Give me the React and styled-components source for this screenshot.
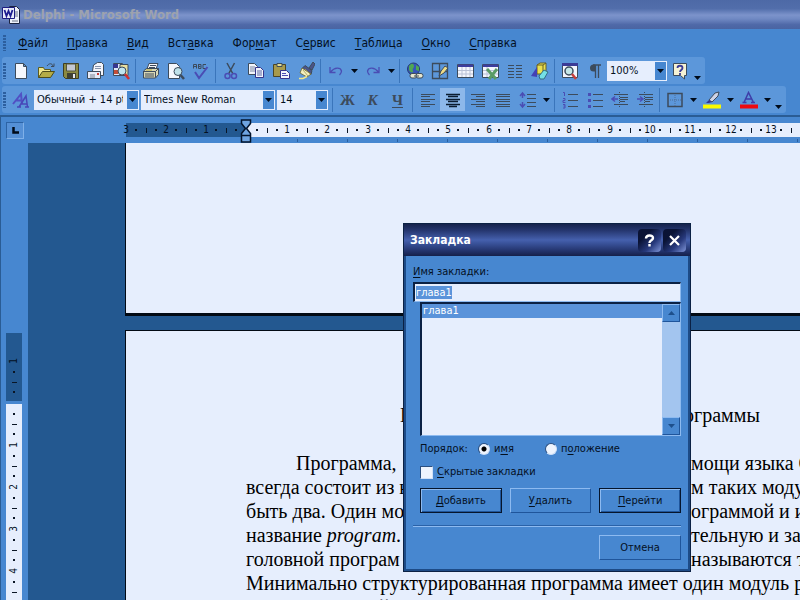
import React, { useEffect, useRef, useState } from 'react'
import styled, { createGlobalStyle, css } from 'styled-components';

const MENU = [
    ['', 'Ф', 'айл'],
    ['', 'П', 'равка'],
    ['', 'В', 'ид'],
    ['Вст', 'а', 'вка'],
    ['Фор', 'м', 'ат'],
    ['С', 'е', 'рвис'],
    ['', 'Т', 'аблица'],
    ['', 'О', 'кно'],
    ['', 'С', 'правка'],
];

const RULER = ['3', '2', '1', '', '1', '2', '3', '4', '5', '6', '7', '8', '9', '10', '11', '12', '13'];
const SIDE_RULER_TOP = ['1'];
const SIDE_RULER = ['', '1', '2', '3', '4'];

const LINES = [
    { indent: true, left: 'Программа,', right: 'мощи языка Object' },
    { left: 'всегда состоит из н', right: 'м таких модулей' },
    { left: 'быть два. Один мод', right: 'ограммой и имеет' },
    { left: <>название <i>program</i>.</>, right: 'тельную и заверша' },
    { left: 'головной програм', right: 'называются так' },
];

/* ---------- icons ---------- */

const ink = '#3c4b5c';
const violet = '#4a4db4';

const ICONS = {
    fresh: <path d="M3.5 1.5h8l3 3v12h-11zM11.5 1.5v3h3" fill="#f4f7fd" stroke={ink} />,
    open: <>
        <path d="M1.5 15.5v-10h5l1 2h6v3" fill="#f0e68a" stroke="#5d5c20" />
        <path d="M1.5 15.5l4-6h12l-4 6z" fill="#b5ac46" stroke="#4d4c1a" />
        <path d="M10 4c2-3 5-3 6 0M14 4.500h3v-3" fill="none" stroke={ink} />
    </>,
    save: <>
        <path d="M1.500 1.500h15v15h-13l-2-2z" fill="#8b8a42" stroke="#3d3d22" />
        <path d="M4.500 2h9v7h-9z" fill="#c3c8d2" stroke="#55553a" />
        <path d="M5 11h9v5h-9z" fill="#3f4033" />
        <path d="M11 12h2v4h-2z" fill="#e8ebf2" />
    </>,
    mail: <>
        <path d="M5.500 9l1-6 4-2.500h4l2 2v11h-3" fill="#f3f5fb" stroke={ink} />
        <path d="M8 4.500h6M8 6.500h6" stroke="#8794ad" />
        <path d="M.500 9.500h13v7h-13z" fill="#e6ebf7" stroke={ink} />
        <path d="M3 13h5M3 15h5" stroke="#7b8493" />
        <path d="M10 11h2v2h-2z" fill="#c83a34" />
    </>,
    search: <>
        <path d="M1.500 1.500h9v12h-9z" fill="#dce4f6" stroke={ink} />
        <path d="M1 2h5v4H1z" fill="#37368f" />
        <path d="M2 8h4v4H2z" fill="#c34d38" />
        <path d="M8 2.500h8v11H8z" fill="#e8dfa0" stroke={ink} />
        <circle cx="10" cy="9" r="4" fill="#bfe4ee" stroke={ink} />
        <path d="M13 12l4 5" stroke="#cf2f2f" strokeWidth="2.500" />
    </>,
    print: <>
        <path d="M5 7l2-5.500h9L14 7z" fill="#f4f6fb" stroke={ink} />
        <path d="M1.500 9l3-2.500h12v6l-3 3.500h-12z" fill="#d9d8b4" stroke={ink} />
        <path d="M1.500 9.500h12l3-3M13.500 9.500v6M3 12h9M3 14h9M8 3.500h6M7 5.500h6" fill="none" stroke={ink} />
        <path d="M4 8h6" stroke="#b8ac3c" />
    </>,
    preview: <>
        <path d="M1.500 1.500h8l3 3v12h-11z" fill="#f4f7fd" stroke={ink} />
        <circle cx="11" cy="9.500" r="4" fill="#bfe2ea" stroke={ink} />
        <path d="M13.500 13l3.500 4" stroke={ink} strokeWidth="2.500" />
    </>,
    spell: <>
        <path d="M1.500 6.500v-4h3v4M1.500 4.500h3M6.500 2v4.500h2.500v-4H6.500M6.500 4.500h2M14 2.500h-3v4h3" fill="none" stroke={ink} />
        <path d="M3 10l4 6L15.500 5" fill="none" stroke={violet} strokeWidth="2" />
    </>,
    cut: <>
        <path d="M5 1l6 11M12.500 1l-6 11" stroke={ink} strokeWidth="1.500" />
        <circle cx="5.500" cy="14" r="2.500" fill="none" stroke={violet} strokeWidth="1.500" />
        <circle cx="12" cy="14" r="2.500" fill="none" stroke={violet} strokeWidth="1.500" />
    </>,
    copy: <>
        <path d="M1.500 1.500h6l3 3v8h-9z" fill="#f2f5fc" stroke={ink} />
        <path d="M3 5h5M3 7h5M3 9h5" stroke="#7a86a3" />
        <path d="M8.500 5.500h5l3 3v7h-8z" fill="#f2f5fc" stroke="#35358c" />
        <path d="M10 9h5M10 11h5M10 13h5" stroke="#5b66a5" />
    </>,
    paste: <>
        <path d="M1.500 2.500h12v12h-12z" fill="#a79a4c" stroke="#4a4526" />
        <path d="M5 1.500h5v3H5z" fill="#e4dc90" stroke={ink} />
        <path d="M8.500 8.500h6l3 3v5h-9z" fill="#f2f5fc" stroke="#35358c" />
        <path d="M10 11.500h4M10 13.500h6" stroke={violet} />
    </>,
    brush: <>
        <path d="M12 6l4-6 2 2-3 6z" fill="#4b5488" stroke={ink} />
        <path d="M8 3.500l7 5-1 4-9-6z" fill="#4b5488" stroke={ink} />
        <path d="M5 6l9 6-4 3-7-4z" fill="#f3efc0" stroke="#67622c" strokeWidth=".8" />
        <path d="M2 16.500h4l4-2" fill="none" stroke="#efe68b" strokeWidth="1.500" />
        <path d="M6 8l5 6M8 7l5 5" stroke="#a39c4c" strokeWidth=".8" />
    </>,
    undo: <path d="M3 5v5.500h5.500M3.500 10c4-5 10-5 11-1 0 2-1 3-2 4" fill="none" stroke={violet} strokeWidth="1.300" />,
    redo: <path d="M15 5v5.500H9.500M14.500 10c-4-5-10-5-11-1 0 2 1 3 2 4" fill="none" stroke={violet} strokeWidth="1.300" />,
    link: <>
        <circle cx="7.500" cy="7" r="6" fill="#3554b8" stroke="#263b6f" />
        <path d="M3 4c3-4 5-2 5 0s-2 3-1 5-3 2-4-1zM10 3l3 2v4l-3-1z" fill="#4fa653" />
        <rect x="4" y="11.500" width="7" height="4.500" rx="2" fill="#e8e7cf" stroke={ink} />
        <rect x="10" y="11.500" width="7" height="4.500" rx="2" fill="#e8e7cf" stroke={ink} />
        <path d="M8 14h5" stroke={ink} />
    </>,
    tables: <>
        <path d="M1.500 1.500h15v15h-15zM8.500 1.500v15M1.500 9.500h15" fill="none" stroke={ink} strokeWidth="1.300" />
        <path d="M8 14l2-5 4-5 3 2-4 5z" fill="#f0dd86" stroke={ink} />
    </>,
    table: <>
        <path d="M1.500 2.500h16v13h-16z" fill="#f4f6fd" stroke={ink} />
        <path d="M2 2.500h15v2.500H2z" fill="#3d3d9e" />
        <path d="M2 8.500h15M2 12h15M6 5v10M10 5v10M14 5v10" stroke="#b9c1d6" />
    </>,
    excel: <>
        <path d="M1.500 2.500h16v13h-16z" fill="#f4f6fd" stroke={ink} />
        <path d="M2 2.500h15v2.500H2z" fill="#3d3d9e" />
        <path d="M2 8.500h15M2 12h15M6 5v10" stroke="#b9c1d6" />
        <path d="M6 7l9 10M16 7L8 17" stroke="#5a9c66" strokeWidth="3" />
    </>,
    columns: <path d="M2 3.500h6M2 6.500h6M2 9.500h6M2 12.500h6M2 15.500h6M10 3.500h6M10 6.500h6M10 9.500h6M10 12.500h6M10 15.500h6" stroke={ink} />,
    drawing: <>
        <path d="M6 3l3-2h6v9l-3 2H6z" fill="#ebe04f" stroke="#666127" />
        <path d="M12 3v8M6 3h6l3-2" fill="none" stroke="#666127" />
        <path d="M0 14l6-9v10z" fill="#4441b5" />
        <path d="M8 14l5-6 4 2-4 7-4 0z" fill="#73e0e6" stroke="#326f83" />
    </>,
    map: <>
        <path d="M1.500 1.500h15v14h-15z" fill="#f3f5fc" stroke={ink} />
        <path d="M1 1h16v3H1z" fill="#3b3b96" />
        <circle cx="8" cy="9" r="4" fill="#c6e8e8" stroke={ink} strokeWidth="1.500" />
        <path d="M11 12l4 5" stroke="#c8403c" strokeWidth="2.500" />
    </>,
    pilcrow: <>
        <path d="M9 2.500H7.500a3.500 3.500 0 000 7H9z" fill={ink} />
        <path d="M7 3h8M9.500 3v13M12.500 3v13" fill="none" stroke={ink} strokeWidth="1.300" />
    </>,
    help: <>
        <path d="M2.500 1.500h13v12h-2v3.500l-4-3.500h-7z" fill="#f5f2d4" stroke={ink} />
        <path d="M6.500 6c0-3 5-3 5 0 0 2-2.500 2-2.500 4M9 11v2" fill="none" stroke="#3b3b96" strokeWidth="1.800" />
    </>,
    styles: <>
        <path d="M1 13L9 3l1 10M4 9.500h5" fill="none" stroke="#5150c4" strokeWidth="2" />
        <path d="M7 16l7-11 1.500 11M9 13h6M5 16h4M13 16h4" fill="none" stroke="#4747b8" strokeWidth="1.500" />
    </>,
    left: <path d="M2 3.500h14M2 5.500h9M2 8.500h14M2 10.500h9M2 13.500h14M2 15.500h9" stroke={ink} />,
    center: <path d="M2 3.500h14M4 5.500h10M2 8.500h14M4 10.500h10M2 13.500h14M5 15.500h8" stroke="#0b1c30" strokeWidth="1.300" />,
    right: <path d="M2 3.500h14M7 5.500h9M2 8.500h14M7 10.500h9M2 13.500h14M7 15.500h9" stroke={ink} />,
    justify: <path d="M2 3.500h14M2 5.500h14M2 8.500h14M2 10.500h14M2 13.500h14M2 15.500h14" stroke={ink} />,
    spacing: <>
        <path d="M3.500 3v4M3.500 11v4M1 5l2.500-3L6 5M1 13l2.500 3L6 13" fill="none" stroke={violet} strokeWidth="1.500" />
        <path d="M8 3.500h9M8 7.500h9M8 11.500h9M8 15.500h9" stroke={ink} />
    </>,
    numbers: <>
        <path d="M7 3.500h10M7 9.500h10M7 15.500h10" stroke={ink} />
        <path d="M2 1.500h1.500V5M2 7.500h2v2H2v2h2.500M2 13.500h2v3.500H2M2.500 15h1.500" fill="none" stroke={violet} />
    </>,
    bullets: <>
        <path d="M7 3.500h10M7 9.500h10M7 15.500h10" stroke={ink} />
        <path d="M2 2h3v3H2zM2 8h3v3H2zM2 14h3v3H2z" fill={violet} />
    </>,
    outdent: <>
        <path d="M3 3.500h14M9 6.500h8M9 8.500h8M9 10.500h5M3 13.500h14" stroke={ink} />
        <path d="M8.500 1v16" stroke={ink} strokeDasharray="1 1" />
        <path d="M7 8H1M4 5.500L1 8l3 2.500" fill="none" stroke={violet} strokeWidth="1.500" />
    </>,
    indent: <>
        <path d="M3 3.500h14M9 6.500h8M9 8.500h8M9 10.500h5M3 13.500h14" stroke={ink} />
        <path d="M8.500 1v16" stroke={ink} strokeDasharray="1 1" />
        <path d="M1 8h6M4 5.500L7 8l-3 2.500" fill="none" stroke={violet} strokeWidth="1.500" />
    </>,
    border: <>
        <path d="M2 2.500h14v13H2z" fill="none" stroke={ink} strokeWidth="1.500" />
        <path d="M9 4v11M4 9h11" stroke="#4e6f97" strokeDasharray="1 1" />
    </>,
    marker: <>
        <path d="M6 9l6-7 4-1-1 4-6 6z" fill="#cdd3e6" stroke={ink} />
        <path d="M3 12l3-3 3 2-3 1z" fill="#36368f" />
        <path d="M0 13.500h18v4H0z" fill="#fbfb00" />
    </>,
    color: <>
        <path d="M4 11.500L8.500 1.500l5 10M6 8h6M2.500 11.500h4M11 11.500h4" fill="none" stroke="#3e3da8" strokeWidth="1.500" />
        <path d="M0 13.500h18v4H0z" fill="#ee0a10" />
    </>,
};

const Icon = ({ name }) => (
    <svg width="18" height="18" viewBox="0 0 18 18" aria-hidden="true">{ICONS[name]}</svg>
);

const Arrow = ({ up, fill = '#000b1a' }) => (
    <svg width="7" height="4" viewBox="0 0 7 4" aria-hidden="true">
        <path d={up ? 'M0 4h7L3.500 0z' : 'M0 0h7L3.500 4z'} fill={fill} />
    </svg>
);

const Tool = ({ name, label, ...rest }) => (
    <ToolButton type="button" aria-label={label} {...rest}><Icon name={name} /></ToolButton>
);

const Drop = ({ label, low }) => (
    <DropButton type="button" aria-label={label} $low={low}><Arrow /></DropButton>
);

const Combo = ({ label, value, width }) => (
    <ComboBox $width={width}>
        <select aria-label={label} defaultValue={value}>
            <option>{value}</option>
        </select>
        <span><Arrow /></span>
    </ComboBox>
);

const Hot = ({ parts }) => <span>{parts[0]}<u>{parts[1]}</u>{parts[2]}</span>;

function BookmarkDialog() {
    const inputRef = useRef(null);
    const [order, setOrder] = useState('name');
    const [hidden, setHidden] = useState(false);

    useEffect(() => {
        inputRef.current?.focus();
        inputRef.current?.select();
    }, []);

    return (
        <Dialog role="dialog" aria-labelledby="dialog-title">
            <DialogTitle>
                <h2 id="dialog-title">Закладка</h2>
                <CaptionButton type="button" aria-label="Помощь">
                    <svg width="11" height="13" viewBox="0 0 11 13"><path d="M2 4.500C2 .5 9 .5 9 4c0 2.500-3.500 2-3.500 5M5.500 10v2.500" fill="none" stroke="#fff" strokeWidth="2.400" /></svg>
                </CaptionButton>
                <CaptionButton type="button" aria-label="Закрыть">
                    <svg width="11" height="11" viewBox="0 0 11 11"><path d="M1 1l9 9M10 1l-9 9" stroke="#fff" strokeWidth="2.200" /></svg>
                </CaptionButton>
            </DialogTitle>
            <DialogBody>
                <FieldLabel htmlFor="bookmark"><Hot parts={['', 'И', 'мя закладки:']} /></FieldLabel>
                <NameInput id="bookmark" ref={inputRef} defaultValue="глава1" />
                <Indented>
                    <ListBox>
                        <ul role="listbox" aria-label="Закладки">
                            <li role="option" aria-selected="true">глава1</li>
                        </ul>
                        <ScrollBar>
                            <button type="button" aria-label="Вверх"><Arrow up fill="#1d4f8c" /></button>
                            <button type="button" aria-label="Вниз"><Arrow fill="#1d4f8c" /></button>
                        </ScrollBar>
                    </ListBox>
                    <OrderRow role="radiogroup" aria-label="Порядок">
                        <div>Порядок:</div>
                        <label>
                            <Radio name="order" checked={order === 'name'} onChange={() => setOrder('name')} />
                            <Hot parts={['и', 'м', 'я']} />
                        </label>
                        <label>
                            <Radio name="order" checked={order === 'place'} onChange={() => setOrder('place')} />
                            <Hot parts={['п', 'о', 'ложение']} />
                        </label>
                    </OrderRow>
                    <CheckRow>
                        <Check checked={hidden} onChange={() => setHidden(!hidden)} />
                        <Hot parts={['', 'С', 'крытые закладки']} />
                    </CheckRow>
                    <ButtonRow>
                        <PushButton type="button" $strong><Hot parts={['', 'Д', 'обавить']} /></PushButton>
                        <PushButton type="button"><Hot parts={['', 'У', 'далить']} /></PushButton>
                        <PushButton type="button" $strong><Hot parts={['', 'П', 'ерейти']} /></PushButton>
                    </ButtonRow>
                </Indented>
                <Divider />
                <Footer>
                    <PushButton type="button">Отмена</PushButton>
                </Footer>
            </DialogBody>
        </Dialog>
    )
}

function App() {
  return (
    <AppContainer>
        <GlobalStyle />
        <TitleBar>
            <svg width="18" height="18" viewBox="0 0 18 18" aria-hidden="true">
                <path d="M7.500.500h7l3 3v14h-10z" fill="#eef1fa" stroke="#1b2340" />
                <path d="M13 6h3M13 8h3M13 10h3M10 15h6" stroke="#6b7284" />
                <path d="M.500 1.500h12v11H.500z" fill="#e8ebfa" stroke="#1c1c80" />
                <path d="M2.500 4l2 6 2-5 2 5 2-6" fill="none" stroke="#1c1c90" strokeWidth="1.800" />
            </svg>
            <h1>Delphi - Microsoft Word</h1>
        </TitleBar>
        <MenuBar>
            <Grip />
            {MENU.map((parts) => (
                <MenuItem type="button" key={parts.join('')}><Hot parts={parts} /></MenuItem>
            ))}
        </MenuBar>
        <ToolBar>
            <Grip />
            <Tool name="fresh" label="Создать" />
            <Tool name="open" label="Открыть" />
            <Tool name="save" label="Сохранить" />
            <Tool name="mail" label="Сообщение" />
            <Tool name="search" label="Найти" />
            <Separator />
            <Tool name="print" label="Печать" />
            <Tool name="preview" label="Предварительный просмотр" />
            <Tool name="spell" label="Правописание" />
            <Separator />
            <Tool name="cut" label="Вырезать" />
            <Tool name="copy" label="Копировать" />
            <Tool name="paste" label="Вставить" />
            <Tool name="brush" label="Формат по образцу" />
            <Separator />
            <Tool name="undo" label="Отменить" />
            <Drop label="Список отмены" />
            <Tool name="redo" label="Вернуть" />
            <Drop label="Список возврата" />
            <Separator />
            <Tool name="link" label="Гиперссылка" />
            <Tool name="tables" label="Таблицы и границы" />
            <Tool name="table" label="Добавить таблицу" />
            <Tool name="excel" label="Таблица Excel" />
            <Tool name="columns" label="Колонки" />
            <Tool name="drawing" label="Рисование" />
            <Separator />
            <Tool name="map" label="Схема документа" />
            <Tool name="pilcrow" label="Непечатаемые знаки" />
            <Combo label="Масштаб" value="100%" width={60} />
            <Tool name="help" label="Справка" />
            <Drop label="Параметры панели" low />
        </ToolBar>
        <ToolBar>
            <Grip />
            <Tool name="styles" label="Стили" />
            <ComboGroup>
                <Combo label="Стиль" value="Обычный + 14 pt" width={105} />
                <Combo label="Шрифт" value="Times New Roman" width={134} />
                <Combo label="Размер" value="14" width={51} />
            </ComboGroup>
            <Separator />
            <ToolButton type="button" aria-label="Полужирный"><Glyph>Ж</Glyph></ToolButton>
            <ToolButton type="button" aria-label="Курсив"><Glyph><i>К</i></Glyph></ToolButton>
            <ToolButton type="button" aria-label="Подчеркнутый"><Glyph><u>Ч</u></Glyph></ToolButton>
            <Separator />
            <Tool name="left" label="По левому краю" />
            <Tool name="center" label="По центру" $pressed />
            <Tool name="right" label="По правому краю" />
            <Tool name="justify" label="По ширине" />
            <Tool name="spacing" label="Интервал" />
            <Drop label="Выбор интервала" />
            <Separator />
            <Tool name="numbers" label="Нумерация" />
            <Tool name="bullets" label="Маркеры" />
            <Tool name="outdent" label="Уменьшить отступ" />
            <Tool name="indent" label="Увеличить отступ" />
            <Separator />
            <Tool name="border" label="Границы" />
            <Drop label="Выбор границы" />
            <Tool name="marker" label="Выделение цветом" />
            <Drop label="Выбор выделения" />
            <Tool name="color" label="Цвет шрифта" />
            <Drop label="Выбор цвета" />
            <Drop label="Параметры форматирования" low />
        </ToolBar>
        <RulerBar>
            <TabButton type="button" aria-label="Табуляция">
                <svg width="7" height="7" viewBox="0 0 7 7"><path d="M1.500 0v5.500H7" fill="none" stroke="#000b1a" strokeWidth="2.500" /></svg>
            </TabButton>
            <RulerTrack>
                <Strip>
                    {RULER.map((n, i) => (
                        <RulerCell key={i}><b>{n}</b><i /><s /><i /></RulerCell>
                    ))}
                </Strip>
                <IndentMarker width="12" height="25" viewBox="0 0 12 25" aria-hidden="true">
                    <path d="M1.500 1h9v3.500L6.500 9.500l4 5v8.500h-9v-8.500l4-5-4-5z" fill="#6ea3e0" stroke="#03142c" strokeWidth="1.500" />
                    <path d="M1.500 16.500h9" stroke="#03142c" strokeWidth="1.500" />
                </IndentMarker>
            </RulerTrack>
        </RulerBar>
        <Workspace>
            <SideRuler>
                <SideStrip $dark>
                    {SIDE_RULER_TOP.map((n, i) => (
                        <SideCell key={i}><b>{n}</b><i /><s /><i /></SideCell>
                    ))}
                </SideStrip>
                <SideStrip>
                    {SIDE_RULER.map((n, i) => (
                        <SideCell key={i}><b>{n}</b><i /><s /><i /></SideCell>
                    ))}
                </SideStrip>
            </SideRuler>
            <Canvas>
                <BlankPage />
                <Page>
                    <Heading><span>П</span><span>ограммы</span></Heading>
                    {LINES.map((line, i) => (
                        <TextLine key={i} $indent={line.indent}>
                            <span>{line.left}</span>
                            <span>{line.right}</span>
                        </TextLine>
                    ))}
                    <FullLine>Минимально структурированная программа имеет один модуль program</FullLine>
                    <FullLine>не выполняемый С</FullLine>
                </Page>
            </Canvas>
        </Workspace>
        <BookmarkDialog />
    </AppContainer>
  )
}

export default App;

const GlobalStyle = createGlobalStyle`
    * {
        box-sizing: border-box;
    }

    body {
        margin: 0;
        color: #04101f;
        font: 11px/14px "DejaVu Sans Condensed", "DejaVu Sans", sans-serif;
    }

    button, select, input {
        margin: 0;
        padding: 0;
        border: 0;
        border-radius: 0;
        background: none;
        color: inherit;
        font: inherit;
    }

    svg {
        display: block;
        flex: none;
    }

    u {
        text-underline-offset: 2px;
    }
`;

const AppContainer = styled.div`
    position: relative;
    display: flex;
    flex-direction: column;
    height: 100vh;
    overflow: hidden;
    background: #4787d0;
`;

const TitleBar = styled.header`
    display: flex;
    flex: none;
    align-items: center;
    gap: 3px;
    height: 29px;
    padding-left: 2px;
    background: linear-gradient(#4d69a6, #526eab 30%, #7c93cb 52%, #7089c3 65%, #4f69a8 85%, #4a64a2);

>h1 {
    margin: 0;
    color: #9da2ae;
    font-size: 13px;
    line-height: 18px;
}
`;

const MenuBar = styled.nav`
    display: flex;
    flex: none;
    align-items: center;
    gap: 1px;
    height: 28px;
    padding-left: 3px;
`;

const MenuItem = styled.button`
    padding: 0 9px;
    font-size: 12px;
    line-height: 18px;
`;

const Grip = styled.span`
    flex: none;
    width: 3px;
    height: 16px;
    margin-right: 2px;
    background: repeating-linear-gradient(#2c5f9f 0 2px, transparent 2px 3px);
`;

const ToolBar = styled.div`
    display: flex;
    flex: none;
    align-items: center;
    align-self: flex-start;
    height: 27px;
    margin: 0 0 2px 2px;
    padding: 0 2px 0 1px;
    border-radius: 3px;
    background: #5c97da;
`;

const ToolButton = styled.button`
    display: flex;
    flex: none;
    align-items: center;
    justify-content: center;
    width: 25px;
    height: 23px;

    ${({ $pressed }) => $pressed && css`
        background: #8db8ea;
    `}
`;

const DropButton = styled.button`
    display: flex;
    flex: none;
    align-items: ${({ $low }) => ($low ? 'flex-end' : 'center')};
    justify-content: center;
    width: ${({ $low }) => ($low ? 11 : 12)}px;
    height: 18px;
`;

const Separator = styled.span`
    flex: none;
    width: 1px;
    height: 24px;
    margin: 0 2px;
    background: #3a75bb;
`;

const Glyph = styled.span`
    color: ${ink};
    font: bold 15px/18px "Liberation Serif", serif;
`;

const ComboGroup = styled.div`
    display: flex;
    gap: 2px;
    margin: 0 2px 0 1px;
`;

const ComboBox = styled.div`
    display: flex;
    width: ${({ $width }) => $width}px;
    height: 20px;
    border: 1px solid #e6eefd;
    background: #e6eefd;

>select {
    flex: 1;
    min-width: 0;
    margin-right: 4px;
    padding-left: 2px;
    appearance: none;
    outline: none;
}

>span {
    display: flex;
    align-items: center;
    justify-content: center;
    width: 11px;
    background: #4787d0;
}
`;

const RulerBar = styled.div`
    display: flex;
    flex: none;
    align-items: flex-start;
    height: 28px;
    padding: 5px 0 0 5px;
    border-top: 2px solid #2a5c94;
    border-left: 1px solid #2a5c94;
`;

const TabButton = styled.button`
    display: flex;
    flex: none;
    align-items: center;
    justify-content: center;
    width: 18px;
    height: 17px;
    margin-right: 97px;
    border: 1px solid #7fb0e8;
    border-top-color: #2c63a5;
    border-left-color: #2c63a5;
    background: #5590d6;
`;

const RulerTrack = styled.div`
    position: relative;
    flex: 1;
    min-width: 0;
    height: 21px;
    background: repeating-linear-gradient(90deg, transparent 0 49px, #2a5f9f 49px 50px) 127px 17px / 100% 3px no-repeat;
`;

const Strip = styled.div`
    display: grid;
    grid-template-columns: repeat(6, 40px 40px 41px);
    height: 14px;
    margin-top: 1px;
    overflow: hidden;
    background: linear-gradient(90deg, transparent 0 5px, #235890 5px 125px, #e6eefd 125px);
`;

const cellMarks = css`
>b {
    display: flex;
    justify-content: center;
    font-size: 10px;
    font-weight: 400;
    line-height: 14px;
}

>i, >s {
    background: #0a1626;
}
`;

const RulerCell = styled.div`
    display: grid;
    grid-template-columns: repeat(4, 10px);
    align-items: center;
    justify-items: center;
    ${cellMarks}

>i {
    width: 2px;
    height: 2px;
}

>s {
    width: 1px;
    height: 5px;
}
`;

const IndentMarker = styled.svg`
    position: absolute;
    top: -3px;
    left: 119px;
`;

const Workspace = styled.main`
    display: flex;
    flex: 1;
    min-height: 0;
`;

const SideRuler = styled.div`
    display: flex;
    flex: none;
    flex-direction: column;
    gap: 3px;
    width: 28px;
    padding: 190px 6px 0 5px;
    border-left: 1px solid #2a5c94;
    overflow: hidden;
`;

const SideCell = styled.div`
    display: grid;
    flex: none;
    grid-template-rows: 12px 10px 10px 10px;
    align-items: center;
    justify-items: center;
    ${cellMarks}

>b {
    writing-mode: vertical-rl;
    transform: rotate(180deg);
}

>i {
    width: 2px;
    height: 2px;
}

>s {
    width: 5px;
    height: 1px;
}
`;

const SideStrip = styled.div`
    display: flex;
    flex-direction: column;
    width: 16px;
    background: #e6eefd;

    ${({ $dark }) => $dark ? css`
        padding-top: 22px;
        height: 68px;
        background: #235890;
    ` : css`
        flex: 1;
        min-height: 0;
        overflow: hidden;

        >${SideCell}:first-child {
            grid-template-rows: 5px 10px 10px 10px;
        }
    `}
`;

const Canvas = styled.div`
    display: flex;
    flex: 1;
    flex-direction: column;
    gap: 14px;
    min-width: 0;
    padding-left: 97px;
    background: #235890;
    overflow: hidden;
`;

const BlankPage = styled.section`
    flex: none;
    height: 173px;
    border-bottom: 3px solid #020a14;
    border-left: 1px solid #020a14;
    background: #e6eefd;
`;

const Page = styled.section`
    flex: 1;
    padding: 72px 0 0 120px;
    border-top: 1px solid #020a14;
    border-left: 1px solid #020a14;
    background: #e6eefd;
    color: #000;
    font: 20px/24px "Liberation Serif", "Times New Roman", serif;
    white-space: nowrap;
    overflow: hidden;
`;

const TextLine = styled.p`
    display: grid;
    grid-template-columns: 445px 1fr;
    margin: 0;

>span {
    overflow: hidden;
}

>span:first-child {
    padding-left: ${({ $indent }) => ($indent ? 50 : 0)}px;
}
`;

const Heading = styled(TextLine)`
    grid-template-columns: 438px 1fr;
    margin-bottom: 24px;

>span:first-child {
    padding-left: 154px;
}
`;

const FullLine = styled.p`
    margin: 0;
`;

/* ---------- bookmark dialog ---------- */

const Dialog = styled.div`
    position: absolute;
    top: 223px;
    left: 403px;
    width: 288px;
    border: 1px solid #0b2144;
    background: #4787d0;
`;

const DialogTitle = styled.div`
    display: flex;
    align-items: center;
    gap: 2px;
    height: 32px;
    padding: 0 4px 0 6px;
    background: linear-gradient(#16234c, #25366f 20%, #4560ad 50%, #3a539b 60%, #22326a 85%, #15204a);

>h2 {
    flex: 1;
    margin: 0;
    color: #fff;
    font-size: 12px;
    line-height: 16px;
}
`;

const CaptionButton = styled.button`
    display: flex;
    align-items: center;
    justify-content: center;
    width: 23px;
    height: 23px;
    border-radius: 4px;
    background: linear-gradient(135deg, #0a1335 30%, #27397c 65%, #7f95d8);
`;

const DialogBody = styled.div`
    display: flex;
    flex-direction: column;
    padding: 9px 7px 9px 7px;
    border: solid #1d4b87;
    border-width: 0 2px 2px;
`;

const FieldLabel = styled.label`
    margin-bottom: 3px;
`;

const sunken = css`
    border: 1px solid #8dbaf0;
    border-top: 2px solid #0b2144;
    border-left: 2px solid #0b2144;
    background: #e6eefd;
`;

const NameInput = styled.input`
    ${sunken}
    height: 20px;
    padding-left: 1px;
    outline: none;

&::selection {
    background: #5a93da;
    color: #fff;
}
`;

const Indented = styled.div`
    padding-left: 7px;
`;

const ListBox = styled.div`
    ${sunken}
    display: flex;
    height: 134px;

>ul {
    flex: 1;
    margin: 0;
    padding: 0;
    list-style: none;
}

li {
    padding-left: 1px;
    background: #5a93da;
    color: #fff;
}
`;

const ScrollBar = styled.div`
    display: flex;
    flex-direction: column;
    justify-content: space-between;
    width: 18px;
    background: #a3c5ef;

>button {
    display: flex;
    align-items: center;
    justify-content: center;
    height: 18px;
    border: 1px solid #1f559b;
    border-top-color: #8dbaf0;
    border-left-color: #8dbaf0;
    background: #4787d0;
}
`;

const OrderRow = styled.div`
    display: flex;
    align-items: center;
    height: 26px;

>div {
    width: 58px;
}

>label {
    display: flex;
    align-items: center;
    width: 67px;
    white-space: nowrap;
}
`;

const Radio = styled.input.attrs({ type: 'radio' })`
    flex: none;
    width: 12px;
    height: 12px;
    margin-right: 4px;
    appearance: none;
    border: 1px solid #cfe0f8;
    border-top-color: #2a4f80;
    border-left-color: #2a4f80;
    border-radius: 50%;
    background: #eef4fe;

&:checked {
    background: radial-gradient(#000 0 2px, #eef4fe 3px);
}
`;

const CheckRow = styled.label`
    display: flex;
    align-items: center;
    height: 20px;
`;

const Check = styled.input.attrs({ type: 'checkbox' })`
    width: 13px;
    height: 13px;
    margin-right: 4px;
    appearance: none;
    border: 1px solid #cfe0f8;
    border-top-color: #2a4f80;
    border-left-color: #2a4f80;
    background: #eef4fe;

&:checked {
    background: #123a6d;
}
`;

const ButtonRow = styled.div`
    display: grid;
    grid-template-columns: repeat(3, 1fr);
    gap: 8px;
    margin-top: 6px;
`;

const PushButton = styled.button`
    height: 25px;
    border: 1px solid #1f559b;
    border-top-color: #8dbaf0;
    border-left-color: #8dbaf0;

    ${({ $strong }) => $strong && css`
        border: 1px solid #06152c;
        box-shadow: inset 1px 1px #8dbaf0, inset -1px -1px #1f559b;
    `}
`;

const Divider = styled.hr`
    width: 100%;
    height: 2px;
    margin: 12px 0 8px;
    border: 0;
    border-top: 1px solid #2a62a8;
    background: #8dbaf0;
`;

const Footer = styled.div`
    display: flex;
    justify-content: flex-end;

>button {
    width: 82px;
}
`;
